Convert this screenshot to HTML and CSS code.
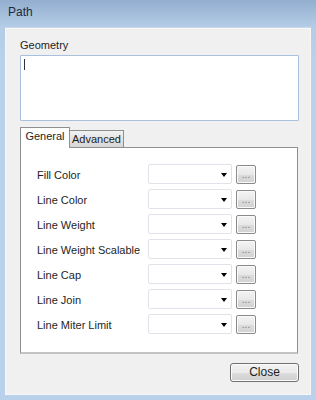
FILE: index.html
```html
<!DOCTYPE html>
<html>
<head>
<meta charset="utf-8">
<link rel="stylesheet" href="styles.css">
</head>
<body>
<div class="window">
  <div class="titlebar">Path</div>
  <div class="client">
    <div class="geo-label">Geometry</div>
    <div class="textbox"><span class="caret"></span></div>
    <div class="tabs">
      <div class="tab active">General</div>
      <div class="tab">Advanced</div>
    </div>
    <div class="panel">
      <div class="grid">
        <div class="lbl">Fill Color</div><div class="combo"><span class="arrow"></span></div><div class="dots">...</div>
        <div class="lbl">Line Color</div><div class="combo"><span class="arrow"></span></div><div class="dots">...</div>
        <div class="lbl">Line Weight</div><div class="combo"><span class="arrow"></span></div><div class="dots">...</div>
        <div class="lbl">Line Weight Scalable</div><div class="combo"><span class="arrow"></span></div><div class="dots">...</div>
        <div class="lbl">Line Cap</div><div class="combo"><span class="arrow"></span></div><div class="dots">...</div>
        <div class="lbl">Line Join</div><div class="combo"><span class="arrow"></span></div><div class="dots">...</div>
        <div class="lbl">Line Miter Limit</div><div class="combo"><span class="arrow"></span></div><div class="dots">...</div>
      </div>
    </div>
    <div class="footer">
      <div class="btn">Close</div>
    </div>
  </div>
</div>
</body>
</html>
```

FILE: styles.css
```css
html, body {
  margin: 0;
  padding: 0;
}
body {
  font-family: "Liberation Sans", Arial, sans-serif;
  font-size: 11px;
  color: #1e1e1e;
}
.window {
  width: 316px;
  height: 400px;
  box-sizing: border-box;
  background: linear-gradient(to bottom, #93aecf 0px, #b4cce6 27px, #b9d1ea 60px, #b9d1ea 100%);
  display: flex;
  flex-direction: column;
  padding: 0 5px 5px 5px;
}
.titlebar {
  height: 27px;
  line-height: 24px;
  padding-left: 3px;
  color: #1e2a3a;
  font-size: 12px;
}
.client {
  flex: 1;
  background: #f0f0f0;
  box-shadow: inset 0 0 0 1px #f7f7f7;
  display: flex;
  flex-direction: column;
  padding: 10px 12px 0 15px;
  border-top: 1px solid #c9d9ea;
}
.geo-label {
  height: 17px;
  line-height: 15px;
  white-space: nowrap;
}
.textbox {
  background: #fff;
  border: 1px solid #a9c0dc;
  border-radius: 1px;
  margin-bottom: 7px;
  padding: 3px 2px;
  box-sizing: content-box;
  height: 58px;
}
.caret {
  display: block;
  width: 1px;
  height: 11px;
  background: #333;
  margin: 0 0 0 1px;
}
.tabs {
  display: flex;
  align-items: flex-end;
  height: 19px;
  position: relative;
  z-index: 2;
}
.tab {
  height: 17px;
  line-height: 16px;
  width: 55px;
  text-align: center;
  border: 1px solid #8e8f8f;
  border-bottom: none;
  background: linear-gradient(to bottom, #f2f2f2, #e3e3e3 50%, #d6d6d6);
  box-sizing: border-box;
  margin-left: -1px;
  white-space: nowrap;
}
.tab.active {
  width: 50px;
  height: 21px;
  line-height: 17px;
  background: #fff;
  margin-left: 0;
  margin-bottom: -1px;
  border-radius: 1px 1px 0 0;
}
.panel {
  height: 207px;
  margin-right: 1px;
  background: #fff;
  border: 1px solid #8e8f8f;
  border-bottom: 2px solid #c4c4c4;
  box-sizing: border-box;
  padding: 16px 0 0 16px;
}
.grid {
  display: grid;
  grid-template-columns: 107px 84px 20px;
  grid-auto-rows: 20px;
  column-gap: 4px;
  row-gap: 5px;
  align-items: center;
}
.lbl {
  line-height: 20px;
  padding-top: 1px;
  white-space: nowrap;
}
.combo {
  height: 20px;
  box-sizing: border-box;
  border: 1px solid #e2e3ea;
  border-radius: 2px;
  background: #fff;
  position: relative;
}
.arrow {
  position: absolute;
  right: 4px;
  top: 8px;
  width: 0;
  height: 0;
  border-left: 3.5px solid transparent;
  border-right: 3.5px solid transparent;
  border-top: 4px solid #000;
}
.dots {
  height: 19px;
  box-sizing: border-box;
  border: 1px solid #8a8a8a;
  border-radius: 2px;
  background: linear-gradient(to bottom, #f4f4f4, #e8e8e8 50%, #dcdcdc 51%, #d2d2d2);
  color: #7a7a7a;
  font-size: 10px;
  text-align: center;
  line-height: 17px;
  box-shadow: inset 0 0 0 1px #fafafa;
}
.footer {
  display: flex;
  justify-content: flex-end;
  padding-top: 9px;
}
.btn {
  width: 69px;
  height: 19px;
  box-sizing: border-box;
  border: 1px solid #707070;
  border-radius: 3px;
  background: linear-gradient(to bottom, #f2f2f2, #ebebeb 50%, #dddddd 51%, #cfcfcf);
  box-shadow: inset 0 0 0 1px #fcfcfc;
  text-align: center;
  line-height: 17px;
  color: #1e1e1e;
  font-size: 12px;
}
```
